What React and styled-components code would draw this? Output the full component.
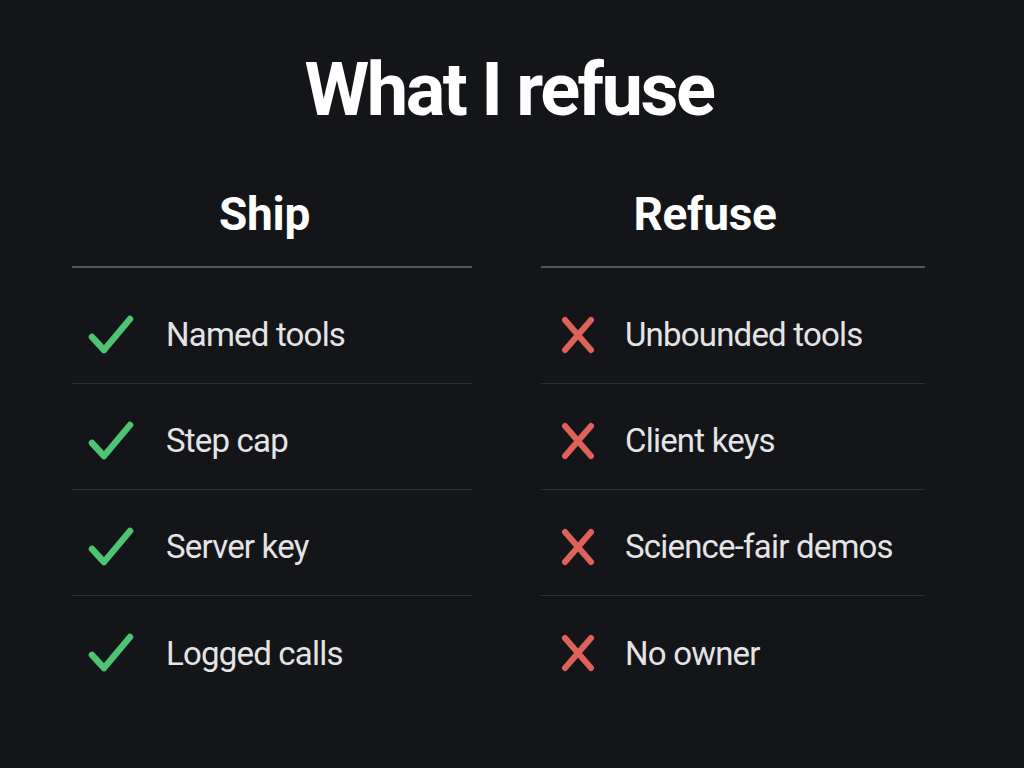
import React from "react"
import styled, { createGlobalStyle } from "styled-components"

const GlobalStyle = createGlobalStyle`
  html, body {
    margin: 0;
    padding: 0;
    background: #141519;
  }
  body {
    font-family: Roboto, "Liberation Sans", Arial, sans-serif;
    color: #e4e4e6;
  }
`

const Page = styled.div`
  width: 1024px;
  height: 768px;
  background: #141519;
  box-sizing: border-box;
  padding-top: 48px;
  overflow: hidden;
`

const Title = styled.h1`
  margin: 0;
  text-align: center;
  font-size: 74px;
  line-height: 84px;
  font-weight: 700;
  letter-spacing: -2.5px;
  color: #ffffff;
  padding-right: 6px;
`

const Columns = styled.div`
  display: grid;
  grid-template-columns: 400px 384px;
  column-gap: 69px;
  padding-left: 72px;
  margin-top: 52px;
`

const Column = styled.section`
  display: flex;
  flex-direction: column;
`

const Heading = styled.h2`
  margin: 0;
  font-size: 46px;
  line-height: 60px;
  font-weight: 700;
  letter-spacing: -0.3px;
  color: #ffffff;
  text-align: center;
  padding-right: ${(p) => p.$shift}px;
  padding-bottom: 22px;
  border-bottom: 2px solid #55565a;
`

const List = styled.ul`
  list-style: none;
  margin: 10px 0 0;
  padding: 0;
`

const Row = styled.li`
  height: 106px;
  box-sizing: border-box;
  padding-top: 8px;
  display: flex;
  align-items: center;
  border-bottom: 1px solid #2d2e33;

  &:last-child {
    border-bottom: none;
  }
`

const IconBox = styled.span`
  box-sizing: border-box;
  width: ${(p) => p.$width}px;
  display: flex;
  align-items: center;
  padding-left: ${(p) => p.$inset}px;
  flex-shrink: 0;
`

const Label = styled.span`
  font-size: 33px;
  font-weight: 400;
  color: #e4e4e6;
  letter-spacing: -0.8px;
  white-space: nowrap;
`

function Check() {
  return (
    <svg width="46" height="42" viewBox="0 0 46 42">
      <path
        d="M4 23 L16 36 L42 5"
        fill="none"
        stroke="#4fc374"
        strokeWidth="6.5"
        strokeLinecap="round"
        strokeLinejoin="round"
      />
    </svg>
  )
}

function Cross() {
  return (
    <svg width="34" height="38" viewBox="0 0 34 38">
      <path
        d="M4 4 L30 34 M30 4 L4 34"
        fill="none"
        stroke="#df625a"
        strokeWidth="6"
        strokeLinecap="round"
      />
    </svg>
  )
}

const ship = ["Named tools", "Step cap", "Server key", "Logged calls"]
const refuse = ["Unbounded tools", "Client keys", "Science-fair demos", "No owner"]

export default function App() {
  return (
    <Page>
      <GlobalStyle />
      <Title>What I refuse</Title>
      <Columns>
        <Column>
          <Heading $shift={15}>Ship</Heading>
          <List>
            {ship.map((item) => (
              <Row key={item}>
                <IconBox $width={94} $inset={16}>
                  <Check />
                </IconBox>
                <Label>{item}</Label>
              </Row>
            ))}
          </List>
        </Column>
        <Column>
          <Heading $shift={56}>Refuse</Heading>
          <List>
            {refuse.map((item) => (
              <Row key={item}>
                <IconBox $width={84} $inset={20}>
                  <Cross />
                </IconBox>
                <Label>{item}</Label>
              </Row>
            ))}
          </List>
        </Column>
      </Columns>
    </Page>
  )
}
